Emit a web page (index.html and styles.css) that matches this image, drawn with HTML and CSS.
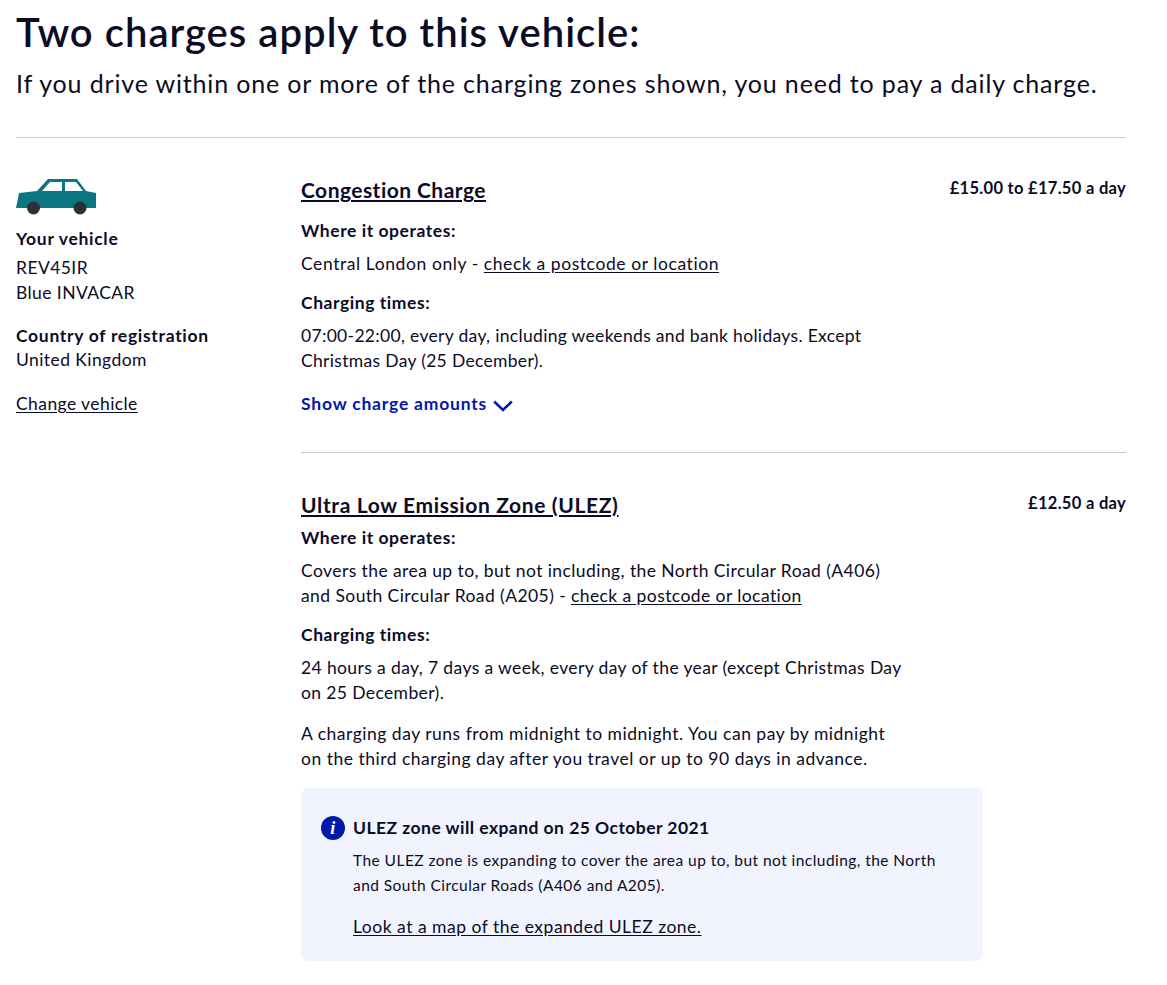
FILE: index.html
```html
<!DOCTYPE html>
<html lang="en">
<head>
<meta charset="utf-8">
<title>Two charges apply to this vehicle</title>
<link rel="stylesheet" href="styles.css">
</head>
<body>
<main class="page">
  <h1 class="title">Two charges apply to this vehicle:</h1>
  <p class="lead">If you drive within one or more of the charging zones shown, you need to pay a daily charge.</p>
  <hr class="rule rule-top">
  <div class="columns">
    <aside class="vehicle">
      <svg class="car" viewBox="0 0 80 37" width="80" height="37" aria-hidden="true">
        <path fill="#0b7680" d="M0 30 L3 15 L21 13 L32 1 L61 1 L70 13 L80 15 L80 30 Z"/>
        <path fill="#fff" d="M26 13 L34 4 L46 4 L46 13 Z M49 4 L60 4 L67 13 L49 13 Z"/>
        <circle cx="17.500" cy="30" r="6.500" fill="#2e2e3a"/>
        <circle cx="64" cy="30" r="6.500" fill="#2e2e3a"/>
      </svg>
      <p class="strong v-title">Your vehicle</p>
      <p class="v-line">REV45IR</p>
      <p class="v-line">Blue INVACAR</p>
      <p class="strong v-country">Country of registration</p>
      <p class="v-line">United Kingdom</p>
      <a class="link v-change" href="#">Change vehicle</a>
    </aside>
    <div class="charges">
      <section class="charge charge-cc">
        <div class="charge-head">
          <a class="charge-name" href="#">Congestion Charge</a>
          <span class="price">£15.00 to £17.50 a day</span>
        </div>
        <h3 class="sub sub-cc">Where it operates:</h3>
        <p class="text text-loose">Central London only - <a class="link" href="#">check a postcode or location</a></p>
        <h3 class="sub">Charging times:</h3>
        <p class="text text-tight">07:00-22:00, every day, including weekends and bank holidays. Except<br>Christmas Day (25 December).</p>
        <a class="toggle" href="#">Show charge amounts
          <svg class="chev" viewBox="0 0 20 12" width="20" height="12" aria-hidden="true"><path d="M1.200 1.500 L10 10 L18.800 1.500" fill="none" stroke="#0019a8" stroke-width="2.600"/></svg>
        </a>
      </section>
      <hr class="rule">
      <section class="charge charge-ulez">
        <div class="charge-head">
          <a class="charge-name charge-name-wide" href="#">Ultra Low Emission Zone (ULEZ)</a>
          <span class="price">£12.50 a day</span>
        </div>
        <h3 class="sub sub-first">Where it operates:</h3>
        <p class="text">Covers the area up to, but not including, the North Circular Road (A406)<br>and South Circular Road (A205) - <a class="link" href="#">check a postcode or location</a></p>
        <h3 class="sub">Charging times:</h3>
        <p class="text text-tight-slight">24 hours a day, 7 days a week, every day of the year (except Christmas Day<br>on 25 December).</p>
        <p class="text para">A charging day runs from midnight to midnight. You can pay by midnight<br>on the third charging day after you travel or up to 90 days in advance.</p>
        <div class="notice">
          <div class="notice-head">
            <svg class="info" viewBox="0 0 24 24" width="24" height="24" aria-hidden="true">
              <circle cx="12" cy="12" r="12" fill="#0019a8"/>
              <text x="12" y="18" text-anchor="middle" class="info-i">i</text>
            </svg>
            <span class="notice-title">ULEZ zone will expand on 25 October 2021</span>
          </div>
          <p class="notice-text">The ULEZ zone is expanding to cover the area up to, but not including, the North<br>and South Circular Roads (A406 and A205).</p>
          <a class="link notice-link" href="#">Look at a map of the expanded ULEZ zone.</a>
        </div>
      </section>
    </div>
  </div>
</main>
</body>
</html>
```
FILE: styles.css
```css
* { box-sizing: border-box; }
html, body { margin: 0; padding: 0; background: #fff; }
body { font-family: "Lato", "Liberation Sans", sans-serif; color: #0b0b26; font-size: 17.500px; line-height: 25px; letter-spacing: 0.42px; }
.page { margin-left: 16px; width: 1110px; padding-top: 9px; height: 985px; overflow: hidden; }
.title { margin: 0; font-size: 40px; line-height: 46px; font-weight: 600; letter-spacing: 1.02px; }
.lead { margin: 12px 0 0; font-size: 25px; line-height: 32px; letter-spacing: 0.84px; }
.rule { border: 0; border-top: 1px solid #c3c9d6; margin: 0; }
.rule-top { margin-top: 38px; border-top-color: #ccc; }
.columns { display: flex; padding-top: 39px; }
.vehicle { width: 285px; flex: none; padding-top: 1px; }
.car { display: block; margin-bottom: 11px; }
.vehicle p { margin: 0; }
.strong { font-weight: 700; letter-spacing: 0.7px; }
.vehicle .v-title { line-height: 25px; margin-bottom: 4px; }
.vehicle .v-country { margin-top: 19px; line-height: 23px; }
.v-line { line-height: 25px; }
.link { color: inherit; text-decoration: underline; text-underline-offset: 2px; }
.v-change { display: block; margin-top: 19px; }
.charges { flex: 1; min-width: 0; }
.charge-head { display: flex; justify-content: space-between; align-items: flex-start; }
.charge-name { font-size: 21px; line-height: 26px; font-weight: 700; color: inherit; letter-spacing: 0.45px; text-decoration-thickness: 2px; text-underline-offset: 2px; }
.charge-name-wide { letter-spacing: 0.63px; }
.price { font-weight: 700; font-size: 16.500px; line-height: 22px; letter-spacing: 0.3px; }
.sub { margin: 14px 0 0; font-size: 17.500px; line-height: 25px; font-weight: 700; letter-spacing: 0.55px; }
.sub-cc { margin-top: 15px; }
.sub-first { margin-top: 7px; }
.text { margin: 8px 0 0; }
.text-loose { letter-spacing: 0.58px; }
.text-tight { letter-spacing: 0.32px; }
.text-tight-slight { letter-spacing: 0.38px; }
.para { margin-top: 16px; letter-spacing: 0.5px; }
.toggle { display: inline-flex; align-items: center; gap: 6px; margin-top: 18px; color: #0019a8; font-weight: 700; letter-spacing: 0.8px; text-decoration: none; }
.chev { margin-top: 5px; }
.charge-cc { padding-bottom: 36px; }
.charge-ulez { padding-top: 39px; }
.notice { width: 682px; height: 173px; margin-top: 17px; background: #f1f4fe; border-radius: 8px; padding: 27px 20px 0; }
.notice-head { display: flex; align-items: center; gap: 8px; }
.info { flex: none; }
.info-i { font-family: "Liberation Serif", serif; font-style: italic; font-weight: 700; font-size: 18px; fill: #fff; }
.notice-title { font-weight: 700; font-size: 17.500px; letter-spacing: 0.45px; }
.notice-text { margin: 8px 0 0 32px; font-size: 15.500px; letter-spacing: 0.45px; }
.notice-link { display: block; margin: 16px 0 0 32px; letter-spacing: 0.5px; }
```
